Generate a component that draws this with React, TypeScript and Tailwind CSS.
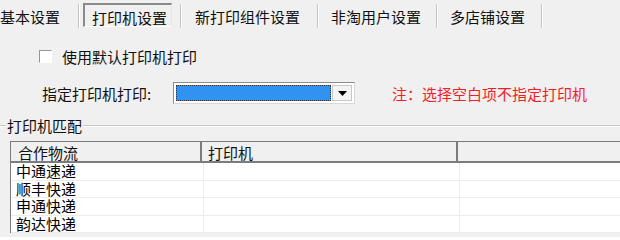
const font = { fontFamily: '"Noto Sans CJK SC", "Noto Sans", sans-serif' };

function Sep({ ml }: { ml: string }) {
  return (
    <div className={`flex h-[24px] self-start mt-[4px] ${ml}`}>
      <div className="w-px h-full bg-[#c4c4c4]" />
      <div className="w-px h-full bg-white" />
    </div>
  );
}

const rows = ['中通速递', '顺丰快递', '申通快递', '韵达快递'];

export default function App() {
  return (
    <div
      className="w-[620px] h-[237px] overflow-hidden bg-[#f0f0f0] text-[15px] leading-none text-[#111]"
      style={font}
    >
      {/* tab strip */}
      <div className="flex h-[30px] items-start">
        <span className="mt-[9px]">基本设置</span>
        <Sep ml="ml-[18px]" />
        <div className="ml-[3px] mt-[3px] h-[24px] w-[89px] border-l-2 border-t-2 border-[#8a8a8a] border-r border-r-[#e6e6e6] border-b border-b-white pl-[7px] pt-[5px]">
          打印机设置
        </div>
        <Sep ml="ml-[8px]" />
        <span className="ml-[13px] mt-[9px]">新打印组件设置</span>
        <Sep ml="ml-[17px]" />
        <span className="ml-[12px] mt-[9px]">非淘用户设置</span>
        <Sep ml="ml-[15px]" />
        <span className="ml-[12px] mt-[9px]">多店铺设置</span>
        <Sep ml="ml-[16px]" />
      </div>

      {/* default printer checkbox */}
      <div className="mt-[19px] flex items-center pl-[39px]">
        <div className="h-[13px] w-[13px] border-l border-t border-[#949494] border-r border-r-white border-b border-b-white bg-white" />
        <span className="ml-[10px]">使用默认打印机打印</span>
      </div>

      {/* printer select row */}
      <div className="mt-[18px] flex items-center pl-[42px]">
        <span className="w-[131px]">指定打印机打印:</span>
        <div className="flex h-[22px] w-[182px] border-l border-t border-[#8c8c8c] border-r border-r-[#d8d8d8] border-b border-b-[#d8d8d8] bg-white p-[2px]">
          <div className="flex-1 border border-dotted border-[#333] bg-[#3192f2]" />
          <div className="ml-px flex w-[20px] items-center justify-center border border-[#c8c8c8] bg-[#f4f4f4]">
            <svg width="9" height="5" viewBox="0 0 9 5">
              <path d="M0 0h9L4.5 5z" fill="#000" />
            </svg>
          </div>
        </div>
        <span className="ml-[37px] text-[#f01e28]">注：选择空白项不指定打印机</span>
      </div>

      {/* group box */}
      <div className="mt-[14px] flex items-center">
        <div className="h-[2px] w-[6px] border-t border-[#c8c8c8] border-b border-b-white" />
        <span className="px-px">打印机匹配</span>
        <div className="h-[2px] flex-1 border-t border-[#c8c8c8] border-b border-b-white" />
      </div>

      {/* grid */}
      <div className="ml-[10px] mt-[8px] border-l border-t border-[#7a7a7a] bg-white">
        <div className="flex h-[21px] border-b-2 border-[#7c7c7c] bg-[#f0f0f0]">
          <div className="w-[191px] border-r-2 border-[#7c7c7c] pl-[7px] pt-[3px]">合作物流</div>
          <div className="w-[256px] border-r-2 border-[#7c7c7c] pl-[6px] pt-[3px]">打印机</div>
          <div className="flex-1" />
        </div>
        {rows.map((r) => (
          <div key={r} className="flex h-[17.5px] border-b border-[#ececec] text-black">
            <div className="w-[193px] border-r border-[#ececec] pl-[5px] leading-[16px]">{r}</div>
            <div className="w-[256px] border-r border-[#ececec]" />
            <div className="flex-1" />
          </div>
        ))}
      </div>
    </div>
  );
}
